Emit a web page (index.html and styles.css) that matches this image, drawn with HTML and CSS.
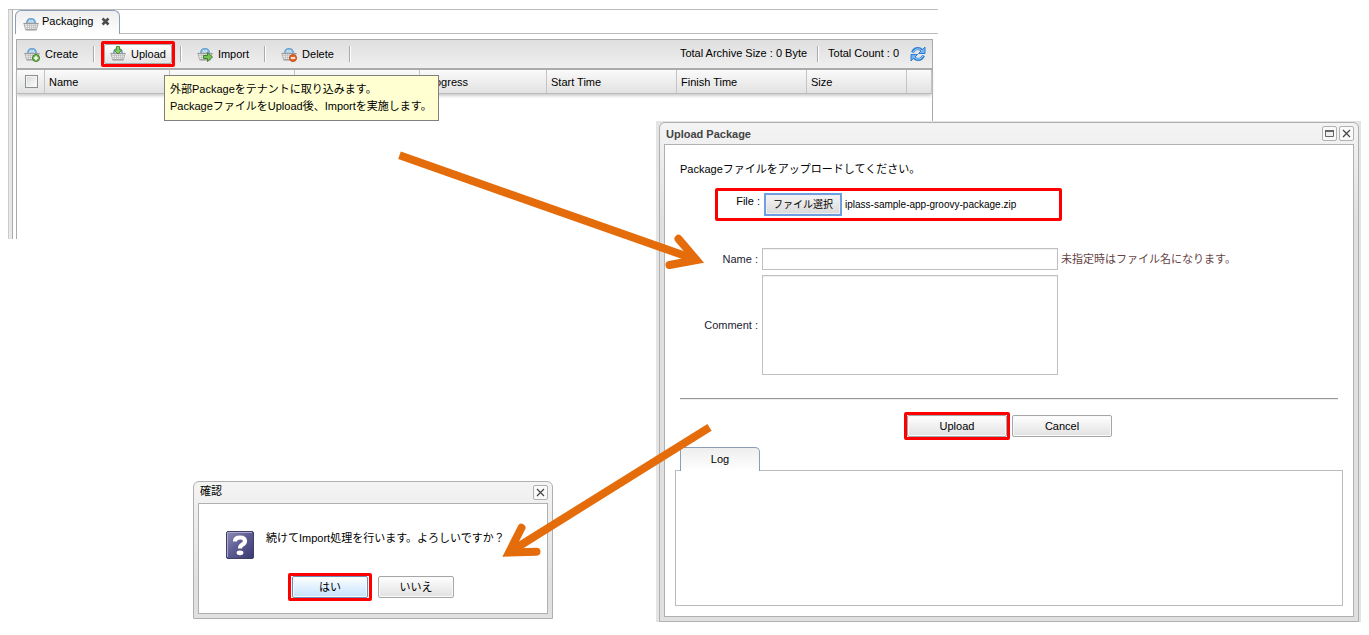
FILE: index.html
```html
<!DOCTYPE html>
<html lang="ja">
<head>
<meta charset="utf-8">
<title>Packaging</title>
<link rel="stylesheet" href="styles.css">
</head>
<body>
<svg class="defs" aria-hidden="true">
  <linearGradient id="purple" x1="0" y1="0" x2="1" y2="1">
    <stop offset="0" stop-color="#8d8cb8"/><stop offset=".5" stop-color="#5b5a91"/><stop offset="1" stop-color="#3b3a70"/>
  </linearGradient>
  <symbol id="basket" viewBox="0 0 16 16">
    <path d="M3.500 8V5.500Q4.500 2 8 2T12.500 5.500V8Z" fill="#8dbbdf"/>
    <path d="M3.800 7V5.500Q4.800 2.500 8 2.500T12.200 5.500V7" fill="none" stroke="#6aa4d2" stroke-width="1.200"/>
    <path d="M5.500 7L7 4M8 7V4.500M10.500 7L9 4" stroke="#e6f1fa" stroke-width="1"/>
    <path d="M1 7.500H15L13.500 13.500H2.500Z" fill="#ececec" stroke="#b0b0b0"/>
    <path d="M.5 7.500H15.500" stroke="#9a9a9a" stroke-width="1.200"/>
    <path d="M2 9.500H14M2.500 11.500H13.500M4.500 8V13.500M6.500 8V13.500M8.500 8V13.500M10.500 8V13.500M12.500 8V13.500" stroke="#bcbcbc" stroke-width=".7"/>
    <path d="M2.500 14H13.500" stroke="#959595"/>
  </symbol>
  <symbol id="cross" viewBox="0 0 9 9"><path d="M1 1L8 8M8 1L1 8" stroke="#444" stroke-width="1.200"/></symbol>
</svg>

<main class="stage">
  <section class="panel">
    <div class="tabs">
      <div class="tab">
        <svg class="icon" viewBox="0 0 16 16"><use href="#basket"/></svg>
        <span>Packaging</span>
        <button class="tab-close" aria-label="Close tab"><svg viewBox="0 0 9 9"><path d="M1.500 1.500L7.500 7.500M7.500 1.500L1.500 7.500" stroke="#4d4d4d" stroke-width="2.600"/></svg></button>
      </div>
    </div>
    <div class="sheet">
      <div class="toolbar">
        <button class="tool"><svg class="icon" viewBox="0 0 16 16"><use href="#basket"/><circle cx="12" cy="12" r="3.500" fill="#72b34f" stroke="#3f8428"/><path d="M12 9.800V14.200M9.800 12H14.200" stroke="#fff" stroke-width="1.500"/></svg>Create</button>
        <i class="sep"></i>
        <span class="mark"><button class="tool raised" aria-describedby="tip"><svg class="icon" viewBox="0 0 16 16"><use href="#basket"/><path d="M6.500.5H9.500V4H12L8 8L4 4H6.500Z" fill="#8acb68" stroke="#489434"/></svg>Upload</button></span>
        <i class="sep"></i>
        <button class="tool wide"><svg class="icon" viewBox="0 0 16 16"><use href="#basket"/><path d="M6.500 9.500H10.500V6.500L15.500 11L10.500 15.500V12.500H6.500Z" fill="#79c15a" stroke="#3d8529"/></svg>Import</button>
        <i class="sep"></i>
        <button class="tool wide"><svg class="icon" viewBox="0 0 16 16"><use href="#basket"/><circle cx="12" cy="12" r="3.500" fill="#e7682d" stroke="#c14b19"/><path d="M9.800 12H14.200" stroke="#fff" stroke-width="1.600"/></svg>Delete</button>
        <i class="sep"></i>
        <span class="total first">Total Archive Size : 0 Byte</span>
        <i class="sep"></i>
        <span class="total">Total Count : 0</span>
        <button class="refresh" aria-label="Refresh"><svg class="icon" viewBox="0 0 16 16"><g fill="none" stroke="#2f7fd0" stroke-width="3"><path d="M2.500 6.500Q4 2.500 8 2.500Q10.500 2.500 12 5"/><path d="M13.500 9.500Q12 13.500 8 13.500Q5.500 13.500 4 11"/></g><path d="M15 1V7.500H8.500Z" fill="#73b5ef" stroke="#2f7fd0"/><path d="M1 15V8.500H7.500Z" fill="#73b5ef" stroke="#2f7fd0"/><path d="M3 6Q4.500 2.800 8 2.800Q10.500 2.800 12 5M13 10Q11.500 13.200 8 13.200Q5.500 13.200 4 11" fill="none" stroke="#a9d5fa"/></svg></button>
      </div>
      <table class="grid">
        <colgroup><col class="c-check"><col class="c-a"><col class="c-a"><col class="c-a"><col class="c-b"><col class="c-c"><col class="c-c"><col class="c-d"><col></colgroup>
        <thead><tr>
          <th><input type="checkbox" aria-label="Select all"></th>
          <th>Name</th><th></th><th></th><th>Progress</th><th>Start Time</th><th>Finish Time</th><th>Size</th><th></th>
        </tr></thead>
      </table>
    </div>
  </section>

  <div class="tooltip" id="tip" role="tooltip">外部Packageをテナントに取り込みます。<br>PackageファイルをUpload後、Importを実施します。</div>

  <section class="window upload" aria-labelledby="up-title">
    <div class="frame">
      <header class="title"><h2 id="up-title">Upload Package</h2>
        <button class="ctl" aria-label="Maximize"><svg viewBox="0 0 9 9"><path d="M.5 1.500H8.500V7.500H.5Z" fill="#eee" stroke="#666"/><path d="M0 2H9" stroke="#666" stroke-width="2"/></svg></button>
        <button class="ctl" aria-label="Close"><svg viewBox="0 0 9 9"><use href="#cross"/></svg></button>
      </header>
      <div class="body">
        <p class="lead">Packageファイルをアップロードしてください。</p>
        <div class="mark file-row">
          <span class="file-label">File :</span>
          <input class="hidden" type="file" id="file" aria-label="File">
          <label class="pick" for="file">ファイル選択</label>
          <span class="file-name">iplass-sample-app-groovy-package.zip</span>
        </div>
        <div class="fields">
          <label for="name">Name :</label><input id="name" type="text"><span class="hint">未指定時はファイル名になります。</span>
          <label for="comment">Comment :</label><textarea id="comment"></textarea>
        </div>
        <hr>
        <div class="actions"><span class="mark"><button class="btn">Upload</button></span><button class="btn">Cancel</button></div>
        <div class="log-tab">Log</div>
        <div class="log"></div>
      </div>
    </div>
  </section>

  <section class="window confirm" aria-labelledby="cf-title">
    <div class="frame">
      <header class="title"><h2 id="cf-title">確認</h2><button class="ctl" aria-label="Close"><svg viewBox="0 0 9 9"><use href="#cross"/></svg></button></header>
      <div class="body">
        <div class="message">
          <svg class="question" viewBox="0 0 28 28"><rect x=".5" y=".5" width="27" height="27" rx="1.500" fill="url(#purple)" stroke="#3e3d6c"/><path d="M1.500 26V1.500H26" fill="none" stroke="#aaa9cc"/><path d="M9 10.500Q9 6.500 14 6.500Q19 6.500 19 10Q19 12.500 16 13.800Q14 14.800 14 17.500" fill="none" stroke="#fff" stroke-width="4.200"/><ellipse cx="14" cy="21.800" rx="3.400" ry="2.400" fill="#fff"/></svg>
          <p>続けてImport処理を行います。よろしいですか？</p>
        </div>
        <div class="actions"><span class="mark"><button class="btn focus">はい</button></span><button class="btn">いいえ</button></div>
      </div>
    </div>
  </section>

  <svg class="arrows" aria-hidden="true">
    <g fill="none" stroke="#e46c0a" stroke-width="8">
      <path d="M399.500 155.300L697 260"/>
      <path d="M678.500 238.800L696.500 260L669.500 265" stroke-linecap="round"/>
      <path d="M709.500 427.300L508 553"/>
      <path d="M521.500 527.800L509 552.500L536.500 551.700" stroke-linecap="round"/>
    </g>
    <path d="M686 250L703 262L682 262ZM515 541L503 556.500L524 550Z" fill="#e46c0a"/>
  </svg>
</main>
</body>
</html>
```

FILE: styles.css
```css
* { box-sizing: border-box; }
body { margin: 0; background: #fff; color: #000; }
body, button, input, textarea { font: 11px/16px "Liberation Sans", Arial, "Noto Sans CJK JP", sans-serif; }
button { color: #000; cursor: pointer; }
h2, p { margin: 0; }
.defs { position: absolute; width: 0; height: 0; }
.stage { position: relative; min-height: 100vh; overflow: hidden; }
.icon { width: 16px; height: 16px; flex: none; }
.mark { border: 3px solid #f00; border-radius: 2px; }

.panel {
  position: absolute; left: 8px; right: 431px; top: 9px; height: 230px;
  display: flex; flex-direction: column;
  padding-left: 3px; border-top: 1px solid #bbb; border-left: 1px solid #ccc;
}
.panel::before { content: ""; position: absolute; left: 0; top: 0; bottom: 0; width: 3px; background: #e8e8e8; border-right: 1px solid #aaa; }
.tabs { height: 24px; margin-left: 3px; border-bottom: 1px solid #bbb; }
.tab {
  display: flex; align-items: center; gap: 4px; width: 105px; height: 24px; padding: 0 8px 2px 7px;
  border: 1px solid #8d9cb8; border-bottom: 0; border-radius: 6px 6px 0 0;
  background: linear-gradient(#eee, #fff);
}
.tab span { margin-bottom: 2px; }
.tab .icon { margin-top: 4px; margin-right: -1px; }
.tab-close { display: flex; padding: 0; margin-left: 4px; border: 0; background: none; }
.tab-close svg { width: 9px; height: 9px; }
.sheet { flex: 1; margin: 5px 5px 0 4px; border: 1px solid #aaa; border-bottom: 0; }
.toolbar { display: flex; align-items: center; height: 30px; border-bottom: 2px solid #aaa; background: linear-gradient(#dfdfdf, #efefef); }
.tool { display: flex; align-items: center; gap: 5px; height: 20px; padding: 0 15px 0 7px; border: 0; border-radius: 2px; background: none; }
.tool.wide { padding: 0 15px; }
.toolbar .mark { margin: 0 5px 0 6px; }
.tool.raised { padding: 0 5px; border: 1px solid #aaa; background: linear-gradient(#fff, #e4e4e4); }
.sep { width: 2px; height: 16px; flex: none; border-left: 1px solid #aaa; border-right: 1px solid #fff; }
.total { margin: 0 11px 2px 9px; white-space: nowrap; }
.total.first { margin: 0 10px 2px auto; }
.refresh { display: flex; padding: 0; margin-right: 6px; border: 0; background: none; }
.grid { width: 100%; table-layout: fixed; border-collapse: separate; border-spacing: 0; box-shadow: 0 2px 3px #ccc; }
.grid th { height: 24px; padding: 0 4px; text-align: left; font-weight: 400; background: linear-gradient(#fafafa, #e2e2e2); border-right: 1px solid #c4c4c4; border-bottom: 1px solid #bbb; white-space: nowrap; }
.grid th:first-child { padding: 0 0 0 8px; }
.grid input { display: block; appearance: none; width: 13px; height: 13px; margin: 0; border: 1px solid #8e8f8f; background: linear-gradient(135deg, #d4d8dc, #fff); outline: 1px solid #f4f4f4; outline-offset: -2px; }
.c-check { width: 28px; }
.c-a { width: 125px; }
.c-b { width: 127px; }
.c-c { width: 130px; }
.c-d { width: 100px; }

.tooltip { position: absolute; left: 164px; top: 75px; padding: 5px; border: 1px solid #808080; background: #ffffd2; line-height: 17px; white-space: nowrap; width: 275px; }

.window { position: absolute; }
.frame { padding: 0 4px 4px; border: 1px solid #b0b0b0; border-radius: 6px 6px 0 0; background: linear-gradient(#f4f4f4, #e0e0e0 100px); }
.title { display: flex; align-items: center; gap: 2px; height: 21px; padding: 0 0 0 2px; }
.title h2 { flex: 1; font-size: 11px; line-height: 16px; color: #444; }
.ctl { display: flex; align-items: center; justify-content: center; width: 15px; height: 15px; padding: 0; border: 1px solid #b0b0b0; border-radius: 2px; background: #f9f9f9; }
.ctl svg { width: 9px; height: 9px; }
.body { border: 1px solid #b0b0b0; background: #fff; }
.btn { height: 22px; border: 1px solid #a6a6a6; border-radius: 2px; padding: 0; background: linear-gradient(#fff, #e1e1e1); box-shadow: inset 0 0 0 1px #fafafa; }
.actions { display: flex; align-items: center; justify-content: center; }

.upload { left: 656px; right: 8px; top: 121px; padding: 1px 2px 0 3px; background: #e4e4e4; }
.upload .body { padding: 16px 10px 10px; }
.lead { padding-left: 5px; }
.file-row { display: flex; align-items: center; width: 347px; height: 33px; margin: 11px 0 0 40px; }
.file-label { width: 46px; padding-right: 4px; margin-bottom: 7px; text-align: right; }
.hidden { position: absolute; width: 1px; height: 1px; opacity: 0; }
.pick { display: flex; align-items: center; justify-content: center; width: 78px; height: 23px; border: 2px solid #6f9fe0; background: linear-gradient(#f5f5f5, #dadada); box-shadow: inset 0 0 0 1px #eee; font-size: 10px; }
.file-name { margin-left: 3px; font-size: 10px; }
.fields { display: grid; grid-template-columns: 83px 296px 1fr; column-gap: 4px; row-gap: 5px; align-items: center; margin-top: 27px; }
.fields label { text-align: right; color: #223; }
.fields input, .fields textarea { display: block; width: 100%; height: 22px; margin: 0; padding: 2px; border: 1px solid #c0c0c0; border-radius: 0; background: #fff; resize: none; box-shadow: inset 0 1px 1px #eee; }
.fields textarea { height: 100px; }
.hint { margin-left: -1px; color: #644; }
hr { height: 2px; margin: 23px 5px 12px; border: 0; border-top: 1px solid #999; border-bottom: 1px solid #eee; }
.upload .actions { gap: 2px; padding-right: 2px; }
.upload .mark { display: flex; }
.upload .btn { width: 100px; }
.log-tab { position: relative; width: 80px; height: 24px; margin: 7px 0 -1px 5px; border: 1px solid #8d9cb8; border-bottom: 0; border-radius: 0 5px 0 0; background: linear-gradient(#eee, #fff); line-height: 22px; text-align: center; }
.log { min-height: 136px; border: 1px solid #bbb; }

.confirm { left: 193px; top: 481px; width: 360px; }
.confirm .title h2 { font-weight: 400; color: #000; margin-bottom: 3px; }
.confirm .body { min-height: 111px; padding: 26px 0 0 27px; }
.message { display: flex; gap: 12px; }
.question { width: 28px; height: 28px; margin-top: 1px; }
.confirm .actions { justify-content: flex-start; gap: 6px; margin: 14px 0 0 62px; }
.confirm .mark { display: flex; padding: 0 1px; }
.confirm .btn { width: 76px; }
.confirm .btn.focus { border-color: #6b8cb8; background: linear-gradient(#fff, #c4e2ff); }

.arrows { position: absolute; left: 0; top: 0; width: 100%; height: 100%; pointer-events: none; }
```
